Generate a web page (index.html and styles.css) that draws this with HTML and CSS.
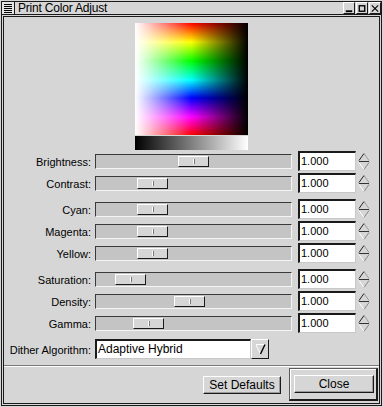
FILE: index.html
```html
<!DOCTYPE html>
<html lang="en">
<head>
  <meta charset="UTF-8">
  <title>Print Color Adjust</title>
  <link rel="stylesheet" href="styles.css">
</head>
<body>
  <div class="window">
    <div class="frame">
      <div class="titlebar">
        <span class="menu-btn">
          <svg width="12" height="12" viewBox="0 0 12 12">
            <path d="M2 2.5h8M2 4.5h8M2 6.5h8M2 8.5h8M2 10.5h8" stroke="#000" stroke-width="1"/>
          </svg>
        </span>
        <span class="title">Print Color Adjust</span>
        <span class="wm-btns">
          <span class="wm-btn">
            <svg width="11" height="11" viewBox="0 0 11 11"><path d="M2 8.5h7" stroke="#000" stroke-width="2"/></svg>
          </span>
          <span class="wm-btn">
            <svg width="11" height="11" viewBox="0 0 11 11"><rect x="2.5" y="2.5" width="6" height="6" fill="none" stroke="#000" stroke-width="1.5"/></svg>
          </span>
          <span class="wm-btn">
            <svg width="11" height="11" viewBox="0 0 11 11"><path d="M2 2L9 9M9 2L2 9" stroke="#000" stroke-width="1.2"/></svg>
          </span>
        </span>
      </div>

      <div class="client">
        <div class="preview">
          <div class="swatch"></div>
          <div class="ramp"></div>
        </div>

        <div class="group">
          <div class="row">
            <label>Brightness:</label>
            <div class="track"><div class="thumb" style="left: 82px"></div></div>
            <div class="field">1.000</div>
            <span class="spin"></span>
          </div>
          <div class="row">
            <label>Contrast:</label>
            <div class="track"><div class="thumb" style="left: 41px"></div></div>
            <div class="field">1.000</div>
            <span class="spin"></span>
          </div>
        </div>

        <div class="group">
          <div class="row">
            <label>Cyan:</label>
            <div class="track"><div class="thumb" style="left: 41px"></div></div>
            <div class="field">1.000</div>
            <span class="spin"></span>
          </div>
          <div class="row">
            <label>Magenta:</label>
            <div class="track"><div class="thumb" style="left: 41px"></div></div>
            <div class="field">1.000</div>
            <span class="spin"></span>
          </div>
          <div class="row">
            <label>Yellow:</label>
            <div class="track"><div class="thumb" style="left: 41px"></div></div>
            <div class="field">1.000</div>
            <span class="spin"></span>
          </div>
        </div>

        <div class="group">
          <div class="row">
            <label>Saturation:</label>
            <div class="track"><div class="thumb" style="left: 19px"></div></div>
            <div class="field">1.000</div>
            <span class="spin"></span>
          </div>
          <div class="row">
            <label>Density:</label>
            <div class="track"><div class="thumb" style="left: 78px"></div></div>
            <div class="field">1.000</div>
            <span class="spin"></span>
          </div>
          <div class="row">
            <label>Gamma:</label>
            <div class="track"><div class="thumb" style="left: 37px"></div></div>
            <div class="field">1.000</div>
            <span class="spin"></span>
          </div>
        </div>

        <div class="group">
          <div class="row dither">
            <label>Dither Algorithm:</label>
            <div class="combo">
              <div class="combo-text">Adaptive Hybrid</div>
              <span class="combo-btn">
                <svg width="11" height="12" viewBox="0 0 11 12">
                  <path d="M1 1.5H10" stroke="#fff" stroke-width="1"/>
                  <path d="M1 1.5L5.5 11" stroke="#fff" stroke-width="1"/>
                  <path d="M10 1.5L5.5 11" stroke="#000" stroke-width="1.4"/>
                </svg>
              </span>
            </div>
          </div>
        </div>

        <div class="separator"></div>

        <div class="actions">
          <button class="btn">Set Defaults</button>
          <div class="default-frame">
            <button class="btn btn-close">Close</button>
          </div>
        </div>
      </div>
    </div>
  </div>
</body>
</html>
```

FILE: styles.css
```css
* {
  box-sizing: border-box;
}

body {
  margin: 0;
  background-color: #d6d6d6;
  font-family: "Liberation Sans", Arial, sans-serif;
  font-size: 11px;
  color: #000;
}

.window {
  width: 383px;
  height: 407px;
  padding: 1px;
  background-color: #d6d6d6;
}

.frame {
  height: 100%;
  border: 1px solid #1a1a1a;
  display: flex;
  flex-direction: column;
}

/* title bar */
.titlebar {
  height: 13px;
  display: flex;
  align-items: center;
  border-bottom: 1px solid #1a1a1a;
  background-color: #d6d6d6;
}

.menu-btn {
  width: 13px;
  height: 12px;
  display: flex;
  align-items: center;
  justify-content: center;
  border-right: 1px solid #1a1a1a;
  background-color: #e4e4e4;
}

.title {
  margin-left: 3px;
  font-size: 12px;
  line-height: 12px;
  letter-spacing: -0.2px;
  flex: 1;
}

.wm-btns {
  display: flex;
  gap: 1px;
  margin-right: 0;
}

.wm-btn {
  width: 12px;
  height: 12px;
  display: flex;
  align-items: center;
  justify-content: center;
  border-top: 1px solid #fff;
  border-left: 1px solid #fff;
  border-right: 1px solid #1a1a1a;
  border-bottom: 1px solid #1a1a1a;
  background-color: #d6d6d6;
}

/* client area */
.client {
  flex: 1;
  margin: 1px;
  border: 1px solid #1a1a1a;
  display: flex;
  flex-direction: column;
}

.preview {
  display: flex;
  flex-direction: column;
  align-items: center;
  gap: 1px;
  padding-top: 6px;
}

.swatch {
  width: 113px;
  height: 112px;
  background:
    linear-gradient(to right, #fff, rgba(255, 255, 255, 0) 50%),
    linear-gradient(to right, rgba(0, 0, 0, 0) 50%, #000),
    linear-gradient(to bottom, #f00, #ff0 17%, #0f0 34%, #0ff 51%, #00f 67%, #f0f 84%, #f00);
}

.ramp {
  width: 113px;
  height: 14px;
  background: linear-gradient(to right, #000, #fff);
}

.group {
  display: flex;
  flex-direction: column;
  gap: 2px;
  margin-top: 6px;
}

.preview + .group {
  margin-top: 1px;
}

.row {
  height: 20px;
  display: grid;
  grid-template-columns: 87px 197px 60px 12px;
  column-gap: 4px;
  align-items: center;
}

.row .field {
  margin-left: 2px;
}

.row .spin {
  margin-left: -2px;
}

.row label {
  text-align: right;
  white-space: nowrap;
  padding-top: 1px;
}

.track {
  position: relative;
  height: 15px;
  background-color: #c4c4c4;
  border-top: 1px solid #3a3a3a;
  border-left: 1px solid #3a3a3a;
  border-bottom: 1px solid #f4f4f4;
  border-right: 1px solid #f4f4f4;
}

.thumb {
  position: absolute;
  top: 1px;
  width: 31px;
  height: 11px;
  background-color: #d6d6d6;
  border-top: 1px solid #fff;
  border-left: 1px solid #fff;
  border-right: 1px solid #1a1a1a;
  border-bottom: 1px solid #1a1a1a;
}

.thumb::after {
  content: "";
  position: absolute;
  left: 14px;
  top: 2px;
  width: 1px;
  height: 5px;
  background-color: #fff;
  border-right: 1px solid #777;
}

.field {
  height: 20px;
  background-color: #fff;
  border-top: 2px solid #1a1a1a;
  border-left: 2px solid #1a1a1a;
  border-bottom: 1px solid #c8c8c8;
  border-right: 1px solid #c8c8c8;
  padding-left: 1px;
  line-height: 17px;
  font-size: 11px;
}

.spin {
  width: 12px;
  height: 20px;
  background-repeat: no-repeat;
  background-image: url("data:image/svg+xml,%3Csvg xmlns='http://www.w3.org/2000/svg' width='12' height='20'%3E%3Cpath d='M1 9.5L6 2.5' stroke='%23222' fill='none'/%3E%3Cpath d='M6 2.5L11 9.5' stroke='%23999' fill='none'/%3E%3Cpath d='M1 10.5H11' stroke='%23333'/%3E%3Cpath d='M1 11.5L6 18.5' stroke='%23fff' fill='none'/%3E%3Cpath d='M6 18.5L11 11.5' stroke='%23888' fill='none'/%3E%3C/svg%3E");
}

.dither {
  grid-template-columns: 87px auto;
}

.combo {
  display: flex;
  height: 20px;
}

.combo-text {
  width: 156px;
  height: 20px;
  background-color: #fff;
  border-top: 2px solid #1a1a1a;
  border-left: 2px solid #1a1a1a;
  border-bottom: 1px solid #c8c8c8;
  border-right: 1px solid #c8c8c8;
  padding-left: 1px;
  line-height: 17px;
  font-size: 12px;
}

.combo-btn {
  width: 18px;
  height: 20px;
  display: flex;
  align-items: center;
  justify-content: center;
  background-color: #d6d6d6;
  border-top: 1px solid #fff;
  border-left: 1px solid #fff;
  border-right: 1px solid #1a1a1a;
  border-bottom: 1px solid #1a1a1a;
}

.separator {
  margin-top: 6px;
  height: 2px;
  border-top: 1px solid #7a7a7a;
  border-bottom: 1px solid #fff;
}

.actions {
  display: flex;
  justify-content: flex-end;
  align-items: center;
  gap: 8px;
  margin-top: 1px;
  margin-right: 1px;
}

.btn {
  font-family: "Liberation Sans", Arial, sans-serif;
  font-size: 12px;
  width: 78px;
  height: 18px;
  padding: 0;
  background-color: #d6d6d6;
  color: #000;
  border-top: 1px solid #fff;
  border-left: 1px solid #fff;
  border-right: 1px solid #1a1a1a;
  border-bottom: 1px solid #1a1a1a;
  box-shadow: inset -1px -1px 0 #9a9a9a;
}

.default-frame {
  border-top: 1px solid #5a5a5a;
  border-left: 1px solid #5a5a5a;
  border-right: 2px solid #1a1a1a;
  border-bottom: 2px solid #1a1a1a;
  box-shadow: inset 1px 1px 0 #fff;
  padding: 6px 2px 6px 4px;
}

.btn-close {
  width: 80px;
  display: block;
}
```
